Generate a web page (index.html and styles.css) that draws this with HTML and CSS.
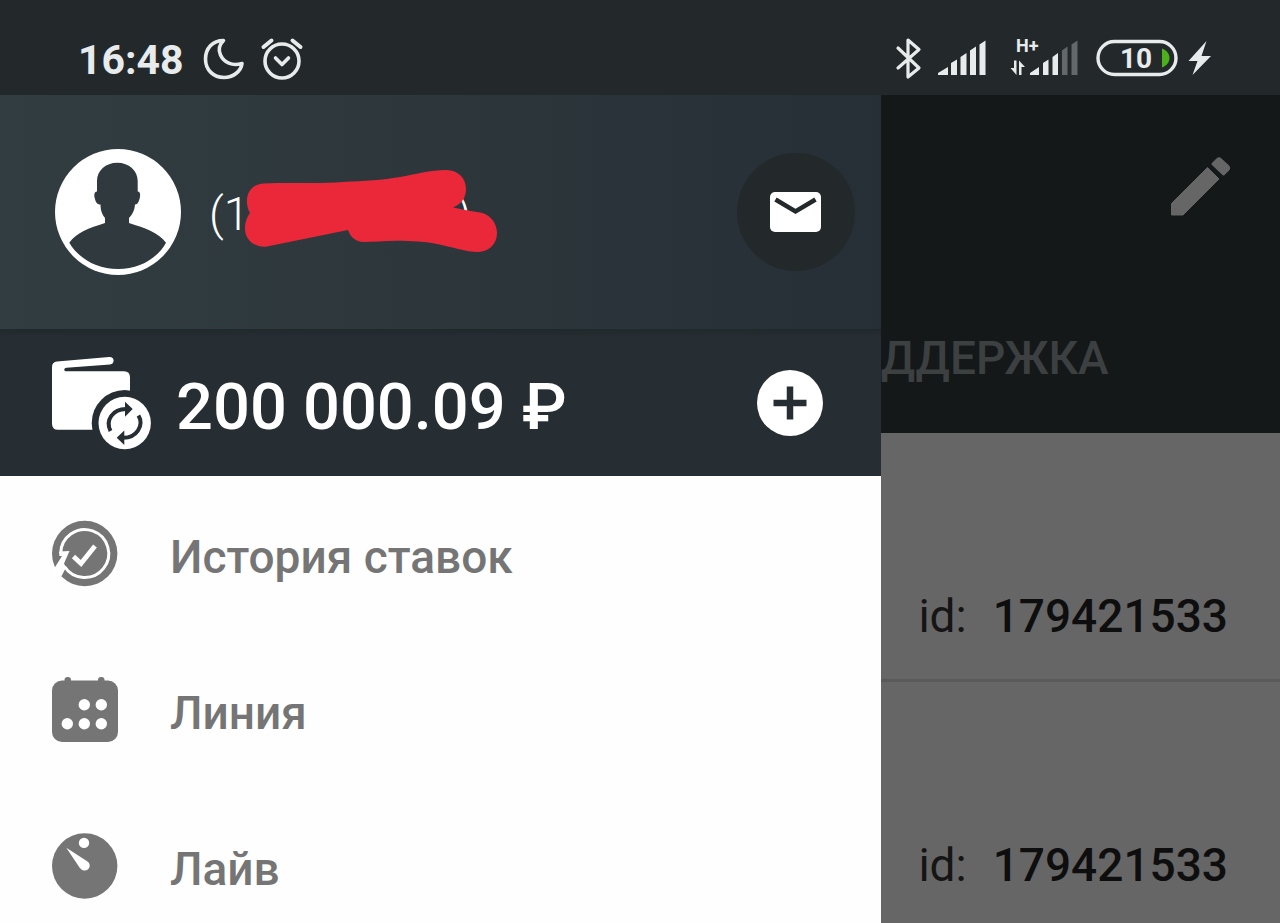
FILE: index.html
```html
<!DOCTYPE html>
<html lang="ru">
<head>
  <meta charset="UTF-8" />
  <title>Меню</title>
  <meta name="viewport" content="width=device-width, initial-scale=1.0" />
  <link rel="stylesheet" href="styles.css">
</head>
<body>

  <header class="status-bar">
    <div class="status-left">
      <span class="status-time">16:48</span>
      <svg width="42" height="44" viewBox="0 0 42 44" fill="none" stroke="#e8ebeb" stroke-width="3.6" stroke-linejoin="round">
        <path d="M20.500 3.500C9.500 3.500 2.500 11.500 2.500 22C2.500 33 10.500 40.500 21 40.500C30 40.500 38 34.500 39 26.500C29 29.500 21 25.500 17.500 18C15 12.500 16.500 7.500 20.500 3.500Z" />
      </svg>
      <svg width="42" height="44" viewBox="0 0 42 44" fill="none" stroke="#e8ebeb" stroke-width="3.6" stroke-linecap="round" stroke-linejoin="round">
        <circle cx="21" cy="24" r="17" />
        <path d="M14.500 21L21 27.500L27.500 21" />
        <path stroke-width="4" d="M2.500 10L10.500 3.500M39.500 10L31.500 3.500" />
      </svg>
    </div>
    <div class="status-right">
      <svg width="26" height="44" viewBox="0 0 26 44" fill="none" stroke="#e8ebeb" stroke-width="3.200" stroke-linejoin="round" stroke-linecap="round">
        <path d="M2 11L23 31L12 40V3L23 12.500L2 31" />
      </svg>
      <svg class="signal" width="48" height="44" viewBox="0 0 48 44" fill="#e8ebeb">
        <path d="M0 38V36L10 30V38ZM13 38V26L19 22.500V38ZM22.500 38V20L28.500 16V38ZM32 38V13.500L38 9.500V38ZM41.500 38V7.500L47.500 3.500V38Z" />
      </svg>
      <svg class="mobile-signal" width="70" height="44" viewBox="0 0 70 44" fill="#e8ebeb">
        <text class="network-label" x="6" y="15">H+</text>
        <path d="M4 23.500H6.500V38L0.500 31H4ZM9 38V23.500L15 30H11.500V38Z" />
        <path d="M20 38V36L29 30V38ZM33 38V26L38.500 22.500V38ZM42.500 38V20L48 16V38Z" />
        <path fill="#63686a" d="M52 38V13.500L57.500 9.500V38ZM61.500 38V7.500L67.500 3.500V38Z" />
      </svg>
      <svg class="battery" width="82" height="44" viewBox="0 0 82 44">
        <rect x="2" y="4.500" width="78" height="33" rx="16.500" fill="none" stroke="#e8ebeb" stroke-width="3.400" />
        <path fill="#4caf1c" d="M66 11.500C76 15 76 27 66 30.500Z" />
        <text class="battery-label" x="40" y="31" text-anchor="middle">10</text>
      </svg>
      <svg width="24" height="44" viewBox="0 0 24 44" fill="#e8ebeb">
        <path d="M18.500 4L0.500 24H9.500L4.500 38L23 19H13.500Z" />
      </svg>
    </div>
  </header>

  <div class="app">
    <nav class="drawer">
      <div class="profile">
        <svg class="avatar" width="126" height="126" viewBox="0 0 126 126">
          <circle cx="63" cy="63" r="63" fill="#fff" />
          <path fill="#2f393e" d="M62.300 13.700C74 13.700 82.700 21.500 82.700 32V42.500C85.500 42.500 85.500 46 84.500 50C83.500 54 82 55.500 80 55.500C79.500 62 77 66 74 69V74C90 79 104 84 111 93.700C102 110 84 120 63 120C42 120 24 110 14.300 93.700C21 84 34 79 50 74V69C47.500 66 45.500 62 45.500 55.500C42.500 55.500 41 54 40 50C38.500 46 39.500 42.500 42 42.500V32C42 21.500 50.500 13.700 62.300 13.700Z" />
        </svg>
        <div class="profile-name">
          <span>(1</span>
          <span>)</span>
          <svg class="marker" viewBox="244 168 256 86">
            <path fill="#ea2839" d="M250 213C243 200 248 184 264 183.500C290 182 320 184 343 182C365 181 382 180 400 177C415 174.500 430 170 446 170C459 170 466 179 466 189C466 197 462 204 453 207.500C462 209 468 211 477 212C490 213 497 223 497 233C497 245 488 252 477 252C468 252 460 249 450 247C436 243 422 241 407 241C390 240 376 242 364 242C355 242 350 236 348 230L267 246.500C255 248 245 240 245 229C245 222 247 217 250 213Z" />
          </svg>
        </div>
        <button class="mail-button" type="button" aria-label="Сообщения">
          <svg width="51" height="42" viewBox="0 0 51 42">
            <rect x="0" y="1" width="51" height="40" rx="5" fill="#fff" />
            <path d="M5.500 8.500L25.500 20.500L45.500 8.500" fill="none" stroke="#23292b" stroke-width="4.500" />
          </svg>
        </button>
      </div>

      <div class="balance">
        <svg class="wallet" width="100" height="96" viewBox="52 356 100 96">
          <path fill="#fff" d="M57 362.500L109 358C115 357.500 115 365 110 365.500L66.500 368.700C63.500 369 63.500 372.300 66.500 372.300H124Q130 372.300 130 378.500V430.700H58Q52 430.700 52 424.700V368Q52 363 57 362.500Z" />
          <circle cx="124.700" cy="424" r="33" fill="#262e33" />
          <circle cx="124.700" cy="424" r="26.200" fill="#fff" />
          <path fill="none" stroke="#262e33" stroke-width="4" d="M110.500 432C105 421 113 410 126 410M138.500 416.500C144.500 427 136 438.700 123.500 438.700" />
          <path fill="#262e33" d="M125 402.700L132.700 410L125 417.700ZM124.300 431.500L116.700 438.700L124.300 446Z" />
        </svg>
        <span class="balance-amount">200 000.09 ₽</span>
        <button class="add-button" type="button" aria-label="Пополнить">
          <svg width="66" height="66" viewBox="0 0 66 66">
            <circle cx="33" cy="33" r="33" fill="#fff" />
            <path d="M16.500 33H49.500M33 16.500V49.500" stroke="#262e33" stroke-width="6.500" />
          </svg>
        </button>
      </div>

      <div class="menu">
        <a href="#history" class="menu-item">
          <svg width="66" height="66" viewBox="0 0 66 66">
            <circle cx="32.700" cy="32.500" r="32.700" fill="#757575" />
            <path fill="none" stroke="#fff" stroke-width="3" d="M8.700 32.500A24 24 0 1 1 12.500 45.500" />
            <path fill="#fff" d="M7.300 30.500L17.500 30L12 42.500L14 46.500L9 56L0 58V51L10 35H7.300Z" />
            <path fill="none" stroke="#fff" stroke-width="4.800" d="M21.500 35.500L29 42.500L43 25" />
          </svg>
          <span>История ставок</span>
        </a>
        <a href="#line" class="menu-item">
          <svg width="66" height="66" viewBox="0 0 66 66">
            <g fill="#757575">
              <rect x="0" y="3.500" width="66" height="61.500" rx="10" />
              <rect x="12.500" y="0" width="6.500" height="8" rx="3" />
              <rect x="46" y="0" width="6.500" height="8" rx="3" />
            </g>
            <g fill="#fff">
              <circle cx="32.300" cy="27.700" r="5.700" />
              <circle cx="49.300" cy="27.700" r="5.700" />
              <circle cx="15.300" cy="46.700" r="5.700" />
              <circle cx="32.300" cy="46.700" r="5.700" />
              <circle cx="49.300" cy="46.700" r="5.700" />
            </g>
          </svg>
          <span>Линия</span>
        </a>
        <a href="#live" class="menu-item">
          <svg width="66" height="66" viewBox="0 0 66 66">
            <circle cx="32.700" cy="33" r="32.700" fill="#757575" />
            <circle cx="32" cy="9.900" r="5.200" fill="#fff" />
            <path fill="#fff" d="M14.300 14.700L35.500 28.500C40 32 37 38 32.500 37.500C30 37.500 28.500 36 27.500 34.500Z" />
          </svg>
          <span>Лайв</span>
        </a>
      </div>
    </nav>

    <main class="content">
      <div class="toolbar">
        <button class="edit-button" type="button" aria-label="Изменить">
          <svg width="62" height="62" viewBox="0 0 62 62" fill="#666" stroke="#666" stroke-linejoin="round">
            <path d="M1.500 48.500L37.500 12.500L49 24L13 60H1.500Z" />
            <path stroke-width="3" d="M43 9L47.500 4.500Q49 3 50.500 4.500L57.500 11Q59.500 13 58 14.500L53.500 19Z" />
          </svg>
        </button>
        <div class="tab">ДДЕРЖКА</div>
      </div>
      <div class="record">
        <span>id:</span>
        <span class="record-id">179421533</span>
      </div>
      <div class="record">
        <span>id:</span>
        <span class="record-id">179421533</span>
      </div>
    </main>
  </div>

</body>
</html>
```

FILE: styles.css
```css
* {
  box-sizing: border-box;
}

body {
  margin: 0;
  height: 100vh;
  overflow: hidden;
  display: flex;
  flex-direction: column;
  background-color: #666;
  font-family: Roboto, 'Noto Sans', sans-serif;
  font-size: 46px;
  line-height: 54px;
}

svg {
  display: block;
  flex: none;
  overflow: visible;
}

button {
  padding: 0;
  border: none;
  background: none;
  cursor: pointer;
}

/* Barra de estado */
.status-bar {
  flex: none;
  height: 95px;
  padding: 22px 68px 0 78px;
  display: flex;
  align-items: center;
  justify-content: space-between;
  background-color: #23282b;
  color: #e8ebeb;
}

.status-left,
.status-right {
  display: flex;
  align-items: center;
}

.status-left {
  gap: 16px;
}

.status-right {
  gap: 10px;
}

.status-time {
  margin-right: 3px;
  padding-top: 2px;
  font-size: 41px;
  font-weight: 700;
}

.signal,
.battery {
  margin-left: 6px;
}

.mobile-signal {
  margin-left: 14px;
}

.network-label {
  font-size: 18px;
  font-weight: 700;
}

.battery-label {
  font-size: 28px;
  font-weight: 700;
  fill: #e8ebeb;
}

.app {
  flex: 1;
  min-height: 0;
  display: flex;
}

/* Drawer */
.drawer {
  flex: none;
  width: 68.8%;
  background-color: #fefefe;
}

.profile {
  height: 234px;
  padding: 0 26px 0 55px;
  display: flex;
  align-items: center;
  gap: 28px;
  background: linear-gradient(90deg, #323d42, #2c363b 50%, #272f36);
}

.profile-name {
  position: relative;
  width: 262px;
  padding-top: 4px;
  display: flex;
  justify-content: space-between;
  font-weight: 300;
  color: #fff;
}

/* trazo rojo sobre el nombre */
.marker {
  position: absolute;
  left: 35px;
  top: -15px;
  width: 256px;
}

.mail-button {
  width: 118px;
  height: 118px;
  margin-left: auto;
  border-radius: 50%;
  background-color: #23292b;
  display: flex;
  align-items: center;
  justify-content: center;
}

.balance {
  height: 147px;
  padding: 0 58px 0 52px;
  display: flex;
  align-items: center;
  gap: 24px;
  background: linear-gradient(#21282c, #262e33 8px);
}

.balance-amount {
  padding-top: 8px;
  font-size: 65px;
  font-weight: 500;
  color: #fff;
}

.add-button {
  margin-left: auto;
}

.menu-item {
  height: 156px;
  padding: 0 52px;
  display: flex;
  align-items: center;
  gap: 52px;
  color: #757575;
  font-weight: 500;
  text-decoration: none;
}

.menu-item span {
  padding-top: 5px;
}

/* Contenido atenuado */
.content {
  flex: 1;
  min-width: 0;
  color: #151515;
}

.toolbar {
  height: 338px;
  padding: 60px 0 48px;
  display: flex;
  flex-direction: column;
  justify-content: space-between;
  background-color: #141819;
}

.edit-button {
  align-self: flex-end;
  margin-right: 48px;
}

.tab {
  font-weight: 500;
  color: #3c4041;
}

.record {
  height: 249px;
  padding: 0 52px 36px 0;
  display: flex;
  align-items: flex-end;
  justify-content: flex-end;
  gap: 26px;
  border-bottom: 3px solid #5a5a5a;
}

.record-id {
  font-weight: 500;
  color: #0e0e0e;
}
```
